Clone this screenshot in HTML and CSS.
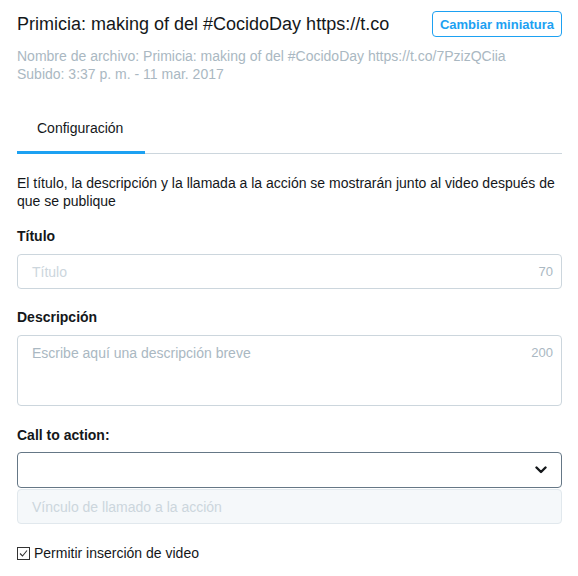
FILE: index.html
```html
<!DOCTYPE html>
<html lang="es">
<head>
<meta charset="utf-8">
<title>Configuración de video</title>
<link rel="stylesheet" href="styles.css">
</head>
<body>
<div class="page">
  <div class="header">
    <h1 class="video-title">Primicia: making of del #CocidoDay https://t.co</h1>
    <button class="btn-outline">Cambiar miniatura</button>
  </div>
  <div class="meta">
    <div>Nombre de archivo: Primicia: making of del #CocidoDay https://t.co/7PzizQCiia</div>
    <div>Subido: 3:37 p. m. - 11 mar. 2017</div>
  </div>
  <div class="tabs">
    <div class="tab active">Configuración</div>
  </div>
  <p class="intro">El título, la descripción y la llamada a la acción se mostrarán junto al video después de que se publique</p>

  <div class="field">
    <label class="label">Título</label>
    <div class="input">
      <span class="placeholder light">Título</span>
      <span class="counter">70</span>
    </div>
  </div>

  <div class="field">
    <label class="label">Descripción</label>
    <div class="input textarea">
      <span class="placeholder">Escribe aquí una descripción breve</span>
      <span class="counter">200</span>
    </div>
  </div>

  <div class="field cta">
    <label class="label">Call to action:</label>
    <div class="select">
      <svg class="chevron" width="12" height="8" viewBox="0 0 12 8"><polyline points="1.5,1.5 6,6 10.5,1.5" fill="none" stroke="#14171A" stroke-width="2.4" stroke-linecap="round" stroke-linejoin="round"/></svg>
    </div>
    <div class="input disabled">
      <span class="placeholder light">Vínculo de llamado a la acción</span>
    </div>
  </div>

  <div class="check-row">
    <span class="checkbox"><svg width="11" height="11" viewBox="0 0 11 11"><polyline points="2,5.5 4.5,8 9,2.5" fill="none" stroke="#333" stroke-width="1.1"/></svg></span>
    <span>Permitir inserción de video</span>
  </div>
</div>
</body>
</html>
```
FILE: styles.css
```css
* { box-sizing: border-box; }
html, body { margin: 0; padding: 0; background: #fff; }
body {
  font-family: "Liberation Sans", Arial, sans-serif;
  font-size: 14px;
  line-height: 18px;
  color: #14171A;
}
.page {
  padding: 11px 16px 0 17px;
}
.header {
  display: flex;
  align-items: center;
  justify-content: space-between;
  height: 26px;
}
.video-title {
  margin: 0;
  font-size: 18px;
  line-height: 22px;
  font-weight: normal;
  color: #14171A;
  white-space: nowrap;
}
.btn-outline {
  width: 130px;
  height: 26px;
  border: 1px solid #1DA1F2;
  border-radius: 4px;
  background: #fff;
  color: #1DA1F2;
  font-family: "Liberation Sans", Arial, sans-serif;
  font-size: 13px;
  font-weight: bold;
  padding: 0;
}
.meta {
  margin-top: 10px;
  color: #AAB8C2;
  font-size: 14px;
  line-height: 18px;
}
.tabs {
  margin-top: 20px;
  display: flex;
  border-bottom: 1px solid #CCD6DD;
}
.tab {
  width: 128px;
  padding: 16px 0 14px 20px;
  margin-bottom: -1px;
  border-bottom: 3px solid #1DA1F2;
  font-size: 14px;
  line-height: 18px;
}
.intro {
  margin: 20px 0 0;
  font-size: 14px;
  line-height: 18px;
}
.field { margin-top: 17px; }
.field + .field { margin-top: 19px; }
.field.cta { margin-top: 20px; }
.label {
  display: block;
  font-weight: bold;
  font-size: 14px;
  line-height: 18px;
  margin-bottom: 9px;
}
.cta .label { margin-bottom: 8px; }
.input {
  display: flex;
  justify-content: space-between;
  align-items: center;
  height: 35px;
  padding: 0 8px 0 14px;
  border: 1px solid #CCD6DD;
  border-radius: 4px;
  background: #fff;
}
.textarea {
  height: 71px;
  align-items: flex-start;
  padding-top: 8px;
}
.placeholder { color: #AAB8C2; }
.placeholder.light { color: #CCD6DD; }
.counter {
  color: #AAB8C2;
  font-size: 13px;
}
.select {
  display: flex;
  justify-content: flex-end;
  align-items: center;
  height: 36px;
  padding-right: 14px;
  border: 1px solid #657786;
  border-radius: 4px;
  background: #fff;
}
.chevron { display: block; }
.disabled {
  margin-top: 1px;
  height: 35px;
  background: #F5F8FA;
  border-color: #E1E8ED;
}
.check-row {
  display: flex;
  align-items: center;
  gap: 4px;
  margin-top: 20px;
}
.checkbox {
  display: inline-flex;
  align-items: center;
  justify-content: center;
  width: 13px;
  height: 13px;
  border: 1px solid #333;
  background: #fff;
}
.checkbox svg { display: block; }
```
